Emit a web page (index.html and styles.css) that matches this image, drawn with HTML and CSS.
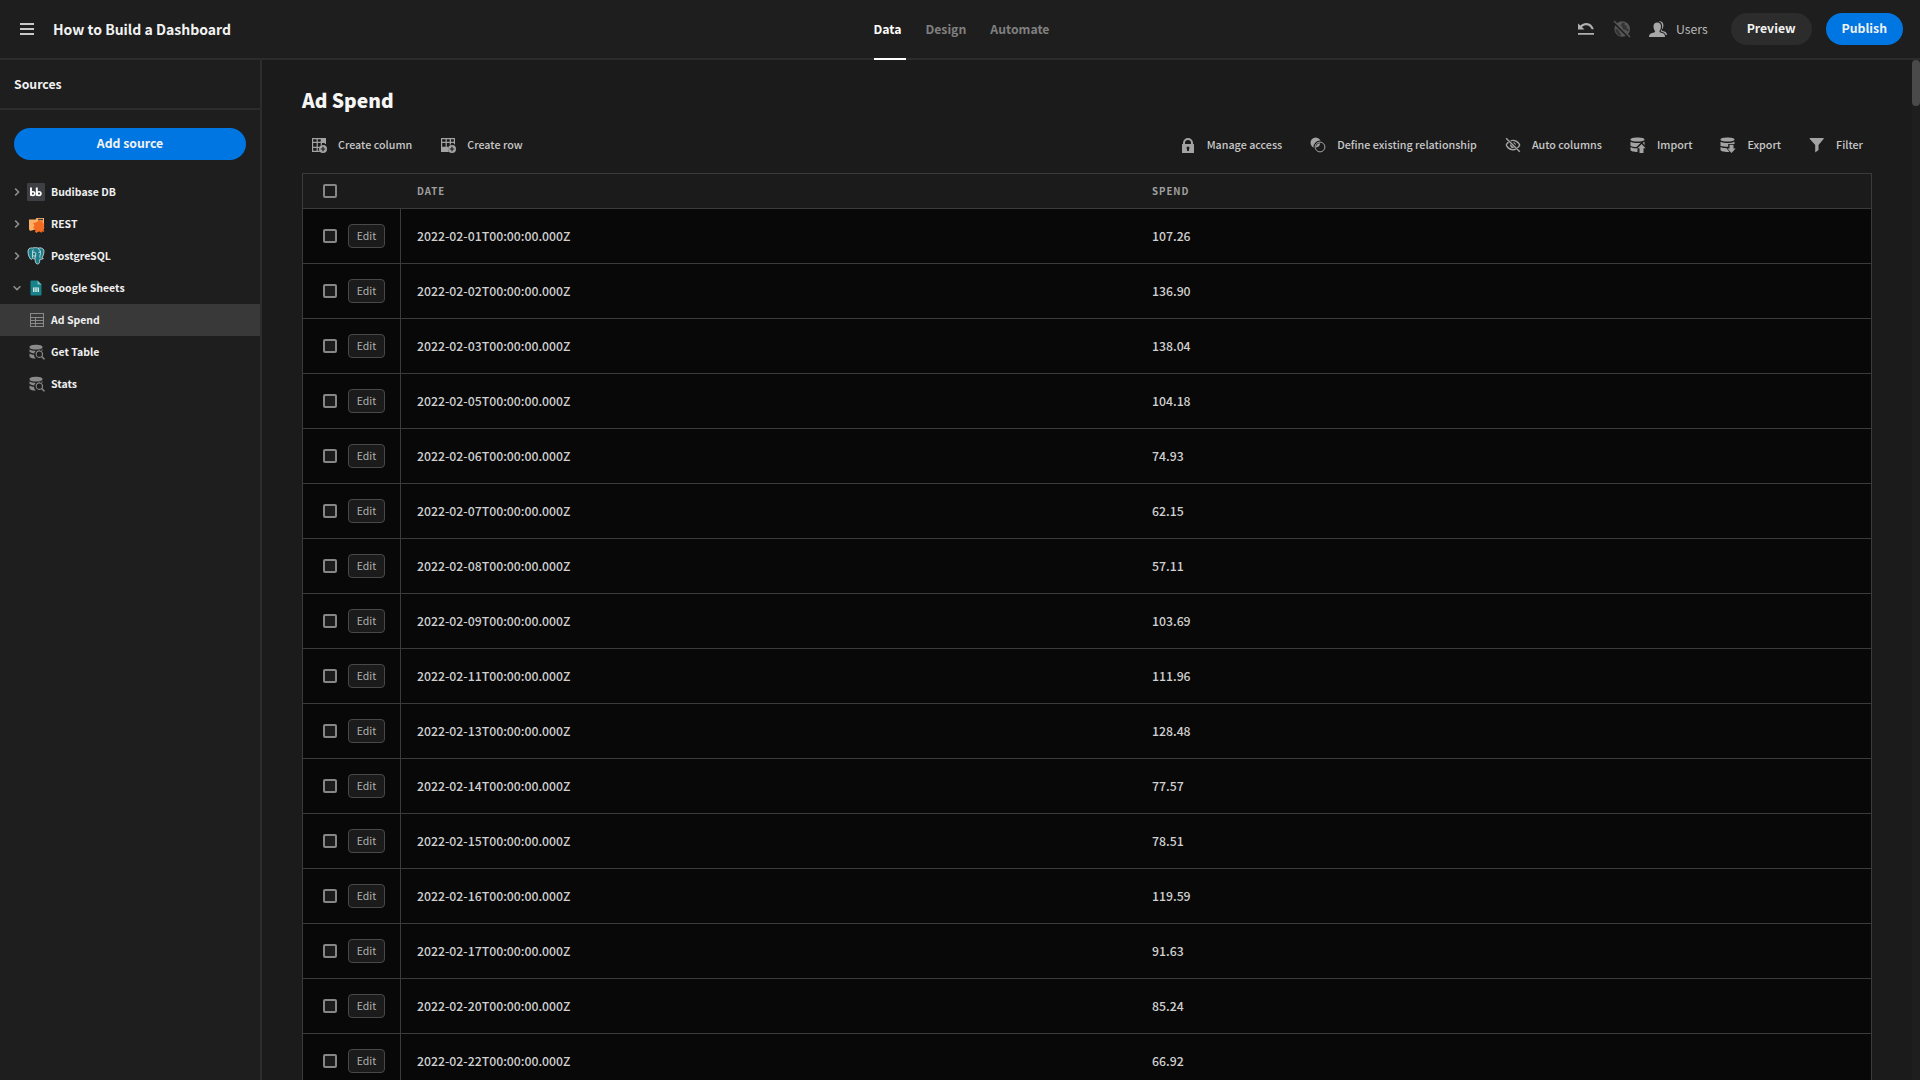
FILE: index.html
```html
<!DOCTYPE html>
<html lang="en">
<head>
<meta charset="utf-8">
<title>How to Build a Dashboard</title>
<meta name="viewport" content="width=device-width, initial-scale=1">
<link rel="stylesheet" href="styles.css">
</head>
<body>
<svg class="sprite" aria-hidden="true">
  <symbol id="i-query" viewBox="0 0 18 18">
    <path d="M1.500 4.200C1.500 2.600 4.400 1.800 8 1.800s6.500.8 6.500 2.400S11.600 6.500 8 6.500 1.500 5.800 1.500 4.200z"/>
    <path d="M1.500 6.300C2.800 7.300 5 7.800 8 7.800a5.500 5.500 0 0 0-1.900 2.600C4 10.200 2.200 9.600 1.500 8.800zM1.500 10.400c1 .7 2.500 1.200 4.400 1.300a5.500 5.500 0 0 0 2 3.900c-3.600 0-6.400-.9-6.400-2.300zM14.500 6.300v1.500a5 5 0 0 0-2-.5c.8-.2 1.500-.6 2-1z"/>
    <path d="M16.700 15.400l-2.200-2.200a3.800 3.800 0 1 0-1.100 1.100l2.200 2.200c.7.500 1.700-.5 1.100-1.100zM8.700 11.200a2.600 2.600 0 1 1 5.200 0 2.600 2.600 0 0 1-5.200 0z"/>
  </symbol>
  <symbol id="i-chevron" viewBox="0 0 10 10"><path d="M3.200 1.600L6.600 5 3.200 8.400" fill="none" stroke="currentColor" stroke-width="1.500"/></symbol>
</svg>

<header class="topbar">
  <div class="topbar-left">
    <button class="icon-button" type="button" aria-label="Menu">
      <svg class="menu-icon" viewBox="0 0 14 12"><path d="M0 0h14v2H0zM0 5h14v2H0zM0 10h14v2H0z"/></svg>
    </button>
    <h1 class="app-name">How to Build a Dashboard</h1>
  </div>
  <nav class="tabs" aria-label="Builder">
    <a class="tab tab-active" href="#data">Data</a>
    <a class="tab" href="#design">Design</a>
    <a class="tab" href="#automate">Automate</a>
  </nav>
  <div class="topbar-right">
    <button class="icon-button" type="button" aria-label="Undo">
      <svg class="icon" viewBox="0 0 18 18"><path d="M1 13h16v1.800H1zM1 3.500l2.300 2.100C5 3.800 7.400 2.900 9.500 3c3.600.2 6.300 2.500 7.300 6.300h-2.100c-.9-2.500-2.900-4-5.500-4.100-1.500 0-3 .5-4.200 1.800L7.400 9.600H1z"/></svg>
    </button>
    <button class="icon-button icon-off" type="button" aria-label="Unpublish" disabled>
      <svg class="icon" viewBox="0 0 18 18"><circle cx="9.200" cy="9" r="7.800"/><path class="globe-gap" d="M9.500 2.500l2.300.5-.3 2 2.500 1-.5 2 2.200 1.200-.7 2.500-2.500-2L10 9.500 9 6l-1.500-.5zM2.500 8.500l3 1.500 1 2.500L8 13.700 7.500 16l-3-1.500-2-3.500z"/><path class="globe-gap-line" d="M.8 2.500l15.500 15.500"/><path class="globe-slash" d="M1 1l16 16"/></svg>
    </button>
    <button class="users" type="button">
      <svg class="users-icon" viewBox="0 0 18 18"><path d="M11.300 12.400c-.7-.2-.8-.9-.8-1.500C11.400 9.800 12 8.400 12 6.600 12 4 10.500 2.500 8.200 2.500S4.500 4 4.500 6.600c0 1.800.6 3.200 1.500 4.300 0 .6-.1 1.300-.8 1.500C2 13 0 14 0 16.500V17h16v-.5c0-2.500-1.500-3.500-4.700-4.100z"/><path d="M9.500 1.300C12 .7 14.400 2 14.400 5.200c0 2-.6 3.400-1.500 4.300-.2.700 0 1.300.7 1.500 2.700.4 4.400 1.700 4.400 4h-1.300c-.6-2-2.300-3.100-4.900-3.500l-.1-.6c1-1.200 1.500-2.600 1.500-4.500 0-2.700-1.300-4.500-3.700-5.100z"/></svg>
      Users
    </button>
    <button class="pill pill-dark" type="button">Preview</button>
    <button class="pill pill-blue" type="button">Publish</button>
  </div>
</header>

<div class="workspace">
  <aside class="sidebar">
    <h2 class="sidebar-title">Sources</h2>
    <div class="sidebar-action"><button class="pill pill-blue pill-wide" type="button">Add source</button></div>
    <nav class="sources" aria-label="Sources">
      <a class="source" href="#budibase">
        <svg class="chevron" viewBox="0 0 10 10"><use href="#i-chevron"/></svg>
        <svg class="logo" viewBox="0 0 18 18"><rect width="18" height="18" rx="1" fill="#3d3f44"/><path d="M4 4.500v8.300M9.800 4.500v8.300" stroke="#fff" stroke-width="1.900"/><circle cx="5.900" cy="10.600" r="1.900" fill="none" stroke="#fff" stroke-width="1.600"/><circle cx="12" cy="10.600" r="1.900" fill="none" stroke="#fff" stroke-width="1.600"/></svg>
        Budibase DB
      </a>
      <a class="source" href="#rest">
        <svg class="chevron" viewBox="0 0 10 10"><use href="#i-chevron"/></svg>
        <svg class="logo" viewBox="0 0 18 18"><path d="M2 4.500h6.500l1-1.500H17v11H10l-7 2-1-2z" fill="#fbb066"/><path d="M11 3.800h5v1.500h-5z" fill="#4b4036"/><path d="M10.500 6.800l1.300-2 1.500 1.700 2.200-.8.200 2.400 1.800.8-1.200 1.800 1.200 1.800-1 1.300.8 3-2.300-.2-.7 1.300-1.500-1.500-2.300.7-.7 1-1.800-1.300.5-2.300L6 12.800l1.500-2L6 8.300z" fill="#f26b21"/></svg>
        REST
      </a>
      <a class="source" href="#postgresql">
        <svg class="chevron" viewBox="0 0 10 10"><use href="#i-chevron"/></svg>
        <svg class="logo" viewBox="0 0 18 18"><path d="M5.500 1C2.500.5.800 2 1 5c.2 2.500 1.300 6 2.500 7 1 .8 1.800 0 2.200-.7.800.7 1.700.6 2.300.3.200 2.200.3 5.200 2.300 5.400 2.200.1 2.400-1.800 2.500-4.700 1.500.1 2.600-.1 3.600-.8-.4-.5-1.200-.4-1.500-.6 1.300-2 2.600-6 1.900-7.900C15.800.800 13 .600 11.300 1.100 9.500.500 7.500.500 5.500 1z" fill="#1a7f8b" stroke="#c4d5d7" stroke-width=".9"/><path d="M6.300 2.500C5 4.500 5.700 7.500 5.500 10.700M11 1.300c2 1.500 2.800 3.500 2.500 5.400-.4 1.800-.9 2.300-.5 4M8 11.500l.3-2.700c-1 .5-2.400 0-2.400-.6M6 5.500c1-.6 2.500-.3 2.700.7v3M11.500 5.500l1.700-.5" fill="none" stroke="#d8e4e5" stroke-width=".9"/></svg>
        PostgreSQL
      </a>
      <a class="source" href="#google-sheets">
        <svg class="chevron chevron-open" viewBox="0 0 10 10"><use href="#i-chevron"/></svg>
        <svg class="logo" viewBox="0 0 18 18"><path d="M4.500 1.500h6l4 4v10a1 1 0 0 1-1 1h-9a1 1 0 0 1-1-1v-13a1 1 0 0 1 1-1z" fill="#16828a"/><path d="M10.500 1.500l4 4h-4z" fill="#7dbcc0"/><path d="M6 8.500h6v4.500H6z" fill="#d5e5e6"/><path d="M7 9.600h1.500v1H7zM9.500 9.600H11v1H9.500zM7 11.400h1.500v1H7zM9.500 11.400H11v1H9.500z" fill="#16828a"/></svg>
        Google Sheets
      </a>
      <a class="source source-child source-selected" href="#ad-spend" aria-current="page">
        <svg class="icon" viewBox="0 0 18 18"><path d="M2 2h14v14H2zM3 3v3h12V3zM3 7v2h4V7zM8 7v2h7V7zM3 10v2h4v-2zM8 10v2h7v-2zM3 13v2h4v-2zM8 13v2h7v-2z" fill-rule="evenodd"/></svg>
        Ad Spend
      </a>
      <a class="source source-child" href="#get-table"><svg class="icon" viewBox="0 0 18 18"><use href="#i-query"/></svg>Get Table</a>
      <a class="source source-child" href="#stats"><svg class="icon" viewBox="0 0 18 18"><use href="#i-query"/></svg>Stats</a>
    </nav>
  </aside>

  <main class="content">
    <h2 class="table-title">Ad Spend</h2>
    <div class="toolbar">
      <button class="tool" type="button">
        <svg class="icon" viewBox="0 0 18 18"><path d="M2 2h14v6h-1.200V7H12v1.500l-1.300 1V7H7.800v3.800h2l-.8 1.200H7.800v2.800h1.500l.8 1.200H2zM3.200 3.200v2.600h3.400V3.200zM7.800 3.200v2.600h2.900V3.200zM3.200 7v3.800h3.400V7zM3.200 12v2.800h3.400V12z" fill-rule="evenodd"/><path d="M13 9a4 4 0 1 0 0 8 4 4 0 0 0 0-8zm2.300 4.600h-1.700v1.700h-1.200v-1.700h-1.700v-1.200h1.700v-1.700h1.200v1.700h1.700z"/></svg>
        Create column
      </button>
      <button class="tool" type="button">
        <svg class="icon" viewBox="0 0 18 18"><path d="M2 2h14v6.500l-1.200-.6V7H12v1.200l-1.300.8V7H7.800v3.800h1.500L9 12v2.800l1.100 1.200H2zM3.200 3.200v2.600h3.400V3.200zM7.800 3.200v2.600h2.900V3.200zM12 3.200v2.600h2.800V3.200zM3.200 7v3.800h3.400V7z" fill-rule="evenodd"/><path d="M13 9a4 4 0 1 0 0 8 4 4 0 0 0 0-8zm2.300 4.600h-1.700v1.700h-1.200v-1.700h-1.700v-1.200h1.700v-1.700h1.200v1.700h1.700z"/></svg>
        Create row
      </button>
      <span class="toolbar-space"></span>
      <button class="tool" type="button">
        <svg class="icon" viewBox="0 0 18 18"><path d="M14.500 8H14V7A5 5 0 0 0 4 7v1h-.5a.5.5 0 0 0-.5.500v8a.5.5 0 0 0 .5.500h11a.5.5 0 0 0 .5-.5v-8a.5.5 0 0 0-.5-.5zM6 7a3 3 0 0 1 6 0v1H6zm4 6.100V14.500a.5.5 0 0 1-.5.500h-1a.5.5 0 0 1-.5-.5v-1.400a1.500 1.500 0 1 1 2 0z"/></svg>
        Manage access
      </button>
      <button class="tool" type="button">
        <svg class="icon" viewBox="0 0 18 18"><circle cx="6.700" cy="6.700" r="5.200"/><circle class="ring-gap" cx="11" cy="11" r="5"/><circle class="ring" cx="11" cy="11" r="4.900"/><path d="M11.200 7.200a5.200 5.200 0 0 1-4.300 4.300A4.200 4.200 0 0 1 11.200 7.200z"/></svg>
        Define existing relationship
      </button>
      <button class="tool" type="button">
        <svg class="icon" viewBox="0 0 18 18"><path d="M2.600 1.700l13.700 13.600-1 1L1.600 2.700z"/><path d="M4 5.800l1 1C3.900 7.700 3.200 8.600 3 9c.8 1.600 3 4 6 4 .8 0 1.500-.1 2.100-.4l1.200 1.200c-1 .4-2.100.7-3.300.7-4.200 0-7.300-3.700-7.300-5.500 0-.8.800-2.100 2.300-3.200zM6.200 4.300C7 3.900 8 3.700 9 3.700c4.300 0 7.300 3.700 7.300 5.300 0 .9-.9 2.200-2.400 3.300l-1-1c1.100-.8 1.800-1.700 2-2.300-.8-1.500-3-3.900-5.900-3.900-.6 0-1.100.1-1.600.3z"/><path d="M8.800 6.200a2.900 2.900 0 0 1 3 3.100zM6.200 8l3.900 3.800A3 3 0 0 1 6.200 8z"/></svg>
        Auto columns
      </button>
      <button class="tool" type="button">
        <svg class="icon" viewBox="0 0 18 18"><path d="M1.500 3.600C1.500 2.200 4.400 1.500 8.500 1.500s7 .7 7 2.100-2.900 2-7 2-7-.6-7-2zM1.500 5.800c1.600.8 4 1.200 7 1.200 1.200 0 2.300-.1 3.300-.2L7.500 11c-2.800 0-5-.5-6-1.300zM1.500 11c1.400.8 3.400 1.200 5 1.300h2V16c-4 0-7-.7-7-2.200z"/><path d="M12.600 8.100l4 4.100H14.500V17h-4v-4.800H8.500zM15.500 5.800v3.400l-1.800-2.500z"/></svg>
        Import
      </button>
      <button class="tool" type="button">
        <svg class="icon" viewBox="0 0 18 18"><path d="M1.500 3.600C1.500 2.200 4.400 1.500 8.500 1.500s7 .7 7 2.100-2.900 2-7 2-7-.6-7-2zM1.500 5.800c1.600.8 4 1.200 7 1.200s5.500-.4 7-1.200v2.100H9.200v2.900c-3.500 0-6.500-.4-7.700-1.100zM1.500 11c1.400.8 3.400 1.200 6 1.200L10.500 16c-5.500.2-9-.7-9-2.200z"/><path d="M10.500 8.800h4V12.500h2.200l-4.200 4.500-4.100-4.500h2.100z"/></svg>
        Export
      </button>
      <button class="tool" type="button">
        <svg class="icon" viewBox="0 0 18 18"><path d="M2.200 2h13c.5 0 .7.500.4.900L10.500 9v5L7.200 16.600V9L1.800 2.900C1.500 2.500 1.700 2 2.200 2z"/></svg>
        Filter
      </button>
    </div>

    <table class="grid">
      <colgroup><col class="col-actions"><col><col></colgroup>
      <thead>
        <tr><th scope="col"><input class="check" type="checkbox" aria-label="Select all rows"></th><th scope="col">DATE</th><th scope="col">SPEND</th></tr>
      </thead>
      <tbody>
        <tr><td><div class="actions"><input class="check" type="checkbox" aria-label="Select row"><button class="edit" type="button">Edit</button></div></td><td>2022-02-01T00:00:00.000Z</td><td>107.26</td></tr>
        <tr><td><div class="actions"><input class="check" type="checkbox" aria-label="Select row"><button class="edit" type="button">Edit</button></div></td><td>2022-02-02T00:00:00.000Z</td><td>136.90</td></tr>
        <tr><td><div class="actions"><input class="check" type="checkbox" aria-label="Select row"><button class="edit" type="button">Edit</button></div></td><td>2022-02-03T00:00:00.000Z</td><td>138.04</td></tr>
        <tr><td><div class="actions"><input class="check" type="checkbox" aria-label="Select row"><button class="edit" type="button">Edit</button></div></td><td>2022-02-05T00:00:00.000Z</td><td>104.18</td></tr>
        <tr><td><div class="actions"><input class="check" type="checkbox" aria-label="Select row"><button class="edit" type="button">Edit</button></div></td><td>2022-02-06T00:00:00.000Z</td><td>74.93</td></tr>
        <tr><td><div class="actions"><input class="check" type="checkbox" aria-label="Select row"><button class="edit" type="button">Edit</button></div></td><td>2022-02-07T00:00:00.000Z</td><td>62.15</td></tr>
        <tr><td><div class="actions"><input class="check" type="checkbox" aria-label="Select row"><button class="edit" type="button">Edit</button></div></td><td>2022-02-08T00:00:00.000Z</td><td>57.11</td></tr>
        <tr><td><div class="actions"><input class="check" type="checkbox" aria-label="Select row"><button class="edit" type="button">Edit</button></div></td><td>2022-02-09T00:00:00.000Z</td><td>103.69</td></tr>
        <tr><td><div class="actions"><input class="check" type="checkbox" aria-label="Select row"><button class="edit" type="button">Edit</button></div></td><td>2022-02-11T00:00:00.000Z</td><td>111.96</td></tr>
        <tr><td><div class="actions"><input class="check" type="checkbox" aria-label="Select row"><button class="edit" type="button">Edit</button></div></td><td>2022-02-13T00:00:00.000Z</td><td>128.48</td></tr>
        <tr><td><div class="actions"><input class="check" type="checkbox" aria-label="Select row"><button class="edit" type="button">Edit</button></div></td><td>2022-02-14T00:00:00.000Z</td><td>77.57</td></tr>
        <tr><td><div class="actions"><input class="check" type="checkbox" aria-label="Select row"><button class="edit" type="button">Edit</button></div></td><td>2022-02-15T00:00:00.000Z</td><td>78.51</td></tr>
        <tr><td><div class="actions"><input class="check" type="checkbox" aria-label="Select row"><button class="edit" type="button">Edit</button></div></td><td>2022-02-16T00:00:00.000Z</td><td>119.59</td></tr>
        <tr><td><div class="actions"><input class="check" type="checkbox" aria-label="Select row"><button class="edit" type="button">Edit</button></div></td><td>2022-02-17T00:00:00.000Z</td><td>91.63</td></tr>
        <tr><td><div class="actions"><input class="check" type="checkbox" aria-label="Select row"><button class="edit" type="button">Edit</button></div></td><td>2022-02-20T00:00:00.000Z</td><td>85.24</td></tr>
        <tr><td><div class="actions"><input class="check" type="checkbox" aria-label="Select row"><button class="edit" type="button">Edit</button></div></td><td>2022-02-22T00:00:00.000Z</td><td>66.92</td></tr>
      </tbody>
    </table>
  </main>
  <div class="scroll-track"><div class="scroll-thumb"></div></div>
</div>
</body>
</html>
```
FILE: styles.css
```css
* { box-sizing: border-box; }

body {
  margin: 0;
  height: 100vh;
  display: flex;
  flex-direction: column;
  overflow: hidden;
  background: #1b1b1b;
  color: #e8e8e8;
  font-family: "Source Sans Pro", "Noto Sans CJK SC", sans-serif;
  font-size: 14px;
  /* keeps the x-height of Source Sans when the fallback is in use */
  font-size-adjust: 0.476;
  line-height: 20px;
}

h1, h2 { margin: 0; }
a { color: inherit; text-decoration: none; }
button {
  margin: 0;
  padding: 0;
  border: 0;
  background: none;
  color: inherit;
  font: inherit;
  font-size-adjust: inherit;
}
svg { display: block; flex: none; fill: currentColor; }
.sprite { position: absolute; width: 0; height: 0; }
.icon { width: 18px; height: 18px; }

/* Top bar */
.topbar {
  flex: none;
  display: grid;
  grid-template-columns: 1fr auto 1fr;
  height: 60px;
  padding: 0 17px 0 20px;
  background: #1e1e1e;
  border-bottom: 2px solid #2c2c2c;
}
.topbar-left, .topbar-right { display: flex; align-items: center; }
.topbar-left { gap: 19px; }
.topbar-right { justify-content: flex-end; }
.icon-button { color: #c8c8c8; }
.menu-icon { width: 14px; height: 12px; }
.app-name { font-size: 16px; font-weight: 700; line-height: 24px; color: #f2f2f2; }
.tabs { display: flex; gap: 24px; }
.tab {
  position: relative;
  display: flex;
  align-items: center;
  font-weight: 700;
  color: #808080;
}
.tab-active { color: #fff; }
.tab-active::after {
  content: "";
  position: absolute;
  left: 0;
  bottom: -2px;
  width: 32px;
  height: 2px;
  background: #fff;
}
.topbar-right .icon-button { margin-right: 18px; color: #b0b0b0; }
.topbar-right .icon-off { color: #565656; }
.globe-gap { fill: #1e1e1e; opacity: .6; }
.globe-gap-line { fill: none; stroke: #1e1e1e; stroke-width: 2; }
.globe-slash { fill: none; stroke: currentColor; stroke-width: 1.5; }
.users { display: flex; align-items: center; gap: 9px; margin-right: 23px; color: #b8b8b8; }
.users-icon { width: 18px; height: 18px; color: #a8a8a8; }

.pill {
  height: 32px;
  padding: 0 16px 2px;
  border-radius: 16px;
  font-weight: 700;
  color: #f2f2f2;
}
.pill-dark { margin-right: 14px; background: #2c2c2c; }
.pill-blue { background: #0076e2; }
.pill-wide { width: 100%; }

/* Sidebar */
.workspace { position: relative; flex: 1; display: flex; min-height: 0; }
.sidebar {
  flex: none;
  width: 262px;
  background: #1e1e1e;
  border-right: 2px solid #2c2c2c;
}
.sidebar-title {
  padding: 14px;
  border-bottom: 2px solid #2c2c2c;
  font-size: 14px;
  font-weight: 700;
  line-height: 20px;
  color: #f2f2f2;
}
.sidebar-action { padding: 18px 14px 16px; }
.source {
  display: flex;
  align-items: center;
  height: 32px;
  padding-left: 12px;
  font-size: 12px;
  font-weight: 700;
  color: #f0f0f0;
}
.chevron { width: 10px; height: 10px; margin-right: 5px; color: #8f8f8f; }
.chevron-open { transform: rotate(90deg); }
.logo { width: 18px; height: 18px; margin-right: 6px; }
.source-child { padding-left: 28px; }
.source-child .icon { margin-right: 5px; color: #8a8a8a; }
.source-selected { background: #393939; }

/* Content */
.content { flex: 1; min-width: 0; padding: 25px 48px 0 40px; overflow: hidden; }
.table-title { font-size: 22px; font-weight: 900; line-height: 30px; color: #f5f5f5; }
.toolbar { display: flex; gap: 10px; padding: 14px 0 12px; font-size-adjust: 0.486; }
.toolbar-space { flex: 1; }
.tool {
  display: flex;
  align-items: center;
  gap: 10px;
  height: 32px;
  padding: 0 9px 0 8px;
  font-size: 12px;
  font-weight: 500;
  white-space: nowrap;
  color: #c8c8c8;
}
.tool .icon { color: #a3a3a3; }
.ring-gap { fill: #1b1b1b; stroke: #1b1b1b; stroke-width: 3; }
.ring { fill: none; stroke: currentColor; stroke-width: 1; }

.grid {
  width: 100%;
  table-layout: fixed;
  border-collapse: separate;
  border-spacing: 0;
  border: 1px solid #3b3b3b;
  border-bottom: 0;
}
.col-actions { width: 98px; }
.grid th, .grid td {
  padding: 0 16px;
  border-bottom: 1px solid #3b3b3b;
  text-align: left;
  vertical-align: middle;
}
.grid th {
  height: 35px;
  font-size: 11px;
  font-weight: 700;
  letter-spacing: 1px;
  color: #a0a0a0;
}
.grid td {
  height: 55px;
  background: #080808;
  font-weight: 500;
  color: #d0d0d0;
}
.grid th:first-child, .grid td:first-child { padding: 0 0 0 20px; }
.grid td:first-child { border-right: 1px solid #3b3b3b; }
.actions { display: flex; align-items: center; gap: 11px; }
.check {
  appearance: none;
  display: block;
  width: 14px;
  height: 14px;
  margin: 0;
  border: 2px solid #868686;
  border-radius: 2px;
  background: #1b1b1b;
}
.edit {
  width: 37px;
  height: 24px;
  border: 1px solid #484848;
  border-radius: 4px;
  background: #1b1b1b;
  font-size: 12px;
  font-weight: 400;
  line-height: 20px;
  color: #b0b0b0;
}

/* Scrollbar lies over the right edge */
.scroll-track { position: absolute; top: 0; right: 0; bottom: 0; width: 8px; background: #1e1e1e; }
.scroll-thumb { height: 46px; border-radius: 4px; background: #4a4a4a; }
```
